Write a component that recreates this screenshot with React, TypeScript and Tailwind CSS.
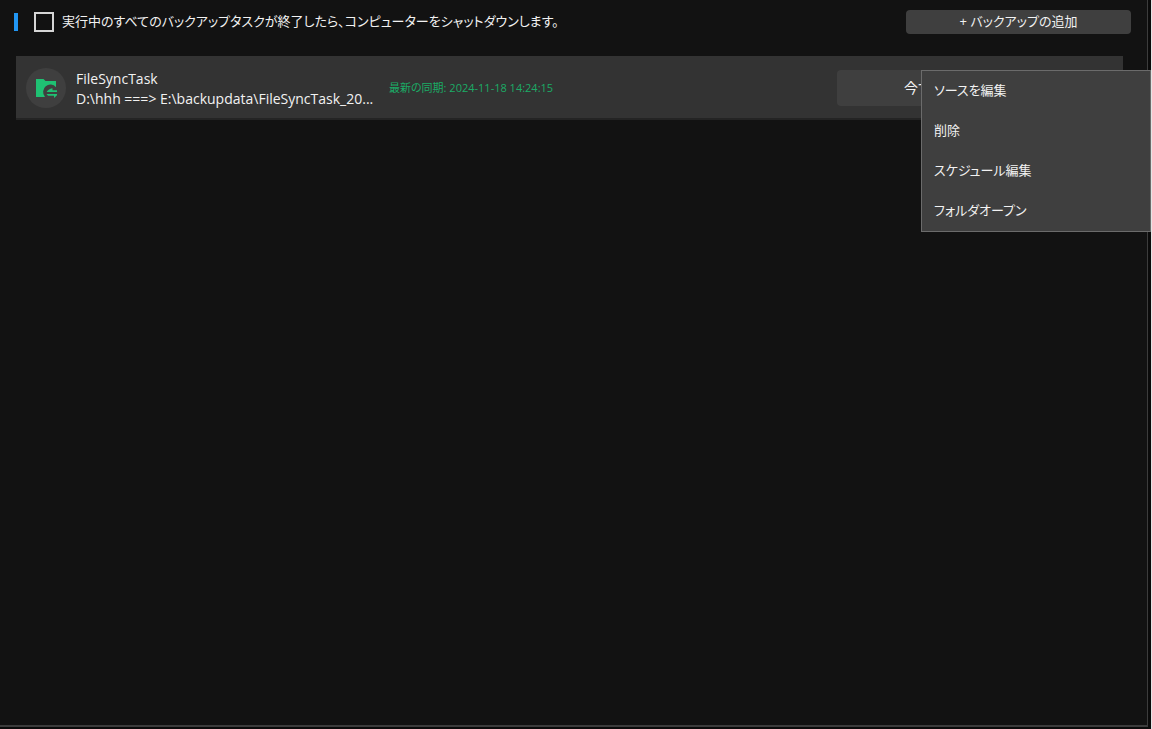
const menuItems = ["ソースを編集", "削除", "スケジュール編集", "フォルダオープン"];

function FolderSyncIcon({ className }: { className?: string }) {
  return (
    <svg viewBox="0 0 22 20" className={className} fill="#1fc173" aria-hidden="true">
      <path d="M1 1h7.500l2 2H21v6.200A6.800 6.800 0 0 0 9.800 18.500V19H1z" />
      <path d="M12 13.300c.8-.6 1.700-1.700 3-2.200.8-.4 1.500-.7 2.500-.8v2H22v1.800h-10.200z" />
      <path d="M11.500 16H22v1.300L19 20v-2.200h-6z" />
    </svg>
  );
}

function TaskRow() {
  return (
    <li className="flex h-16 items-center border-b-2 border-[#242424] bg-[#333333] pt-0.5 pl-2.5">
      <div className="flex h-10 w-10 shrink-0 items-center justify-center rounded-full bg-[#3f3f3f]">
        <FolderSyncIcon className="h-5 w-[22px]" />
      </div>
      <div className="ml-2.5 w-[308px] shrink-0 pt-0.5 text-sm leading-5">
        <p>FileSyncTask</p>
        <p className="whitespace-nowrap">D:\hhh ===&gt; E:\backupdata\FileSyncTask_20...</p>
      </div>
      <p className="ml-[5px] whitespace-nowrap text-[11px] leading-4 text-[#1bab66]">
        最新の同期: 2024-11-18 14:24:15
      </p>
      <div className="relative mr-4 ml-auto w-[270px] shrink-0">
        <button
          type="button"
          className="h-9 w-full rounded bg-[#3f3f3f] pl-[67px] text-left text-sm"
        >
          <span className="block w-[17px] overflow-hidden whitespace-nowrap">今す</span>
        </button>
        <ul
          role="menu"
          className="absolute top-0 left-[84px] w-[230px] border border-[#6b6b6b] bg-[#3f3f3f]"
        >
          {menuItems.map((item) => (
            <li key={item} role="none">
              <button
                type="button"
                role="menuitem"
                className="block h-10 w-full px-3 text-left text-[13px]"
              >
                {item}
              </button>
            </li>
          ))}
        </ul>
      </div>
    </li>
  );
}

export default function App() {
  return (
    <div className="flex h-screen border-r border-[#e5e5e5] bg-[#0b0b0b] pr-[3px] pb-0.5 font-['Open_Sans','Noto_Sans_CJK_JP',sans-serif] text-[#f2f2f2] [font-feature-settings:'palt']">
      <main className="min-w-0 grow border-r border-b-2 border-r-[#3c3c3c] border-b-[#3c3c3c] bg-[#121212]">
        <header className="flex h-14 items-start justify-between pt-2.5 pr-4 pl-3.5">
          <label className="flex h-6 items-center text-[13px]">
            <span className="mr-4 h-[18px] w-1 bg-[#2196f3]" />
            <input
              type="checkbox"
              className="mr-2 h-5 w-5 appearance-none border-2 border-[#d6d6d6] checked:bg-[#2196f3]"
            />
            実行中のすべてのバックアップタスクが終了したら、コンピューターをシャットダウンします。
          </label>
          <button type="button" className="h-6 w-[225px] rounded bg-[#3f3f3f] text-[13px]">
            + バックアップの追加
          </button>
        </header>
        <ul className="mr-6 ml-4">
          <TaskRow />
        </ul>
      </main>
    </div>
  );
}
